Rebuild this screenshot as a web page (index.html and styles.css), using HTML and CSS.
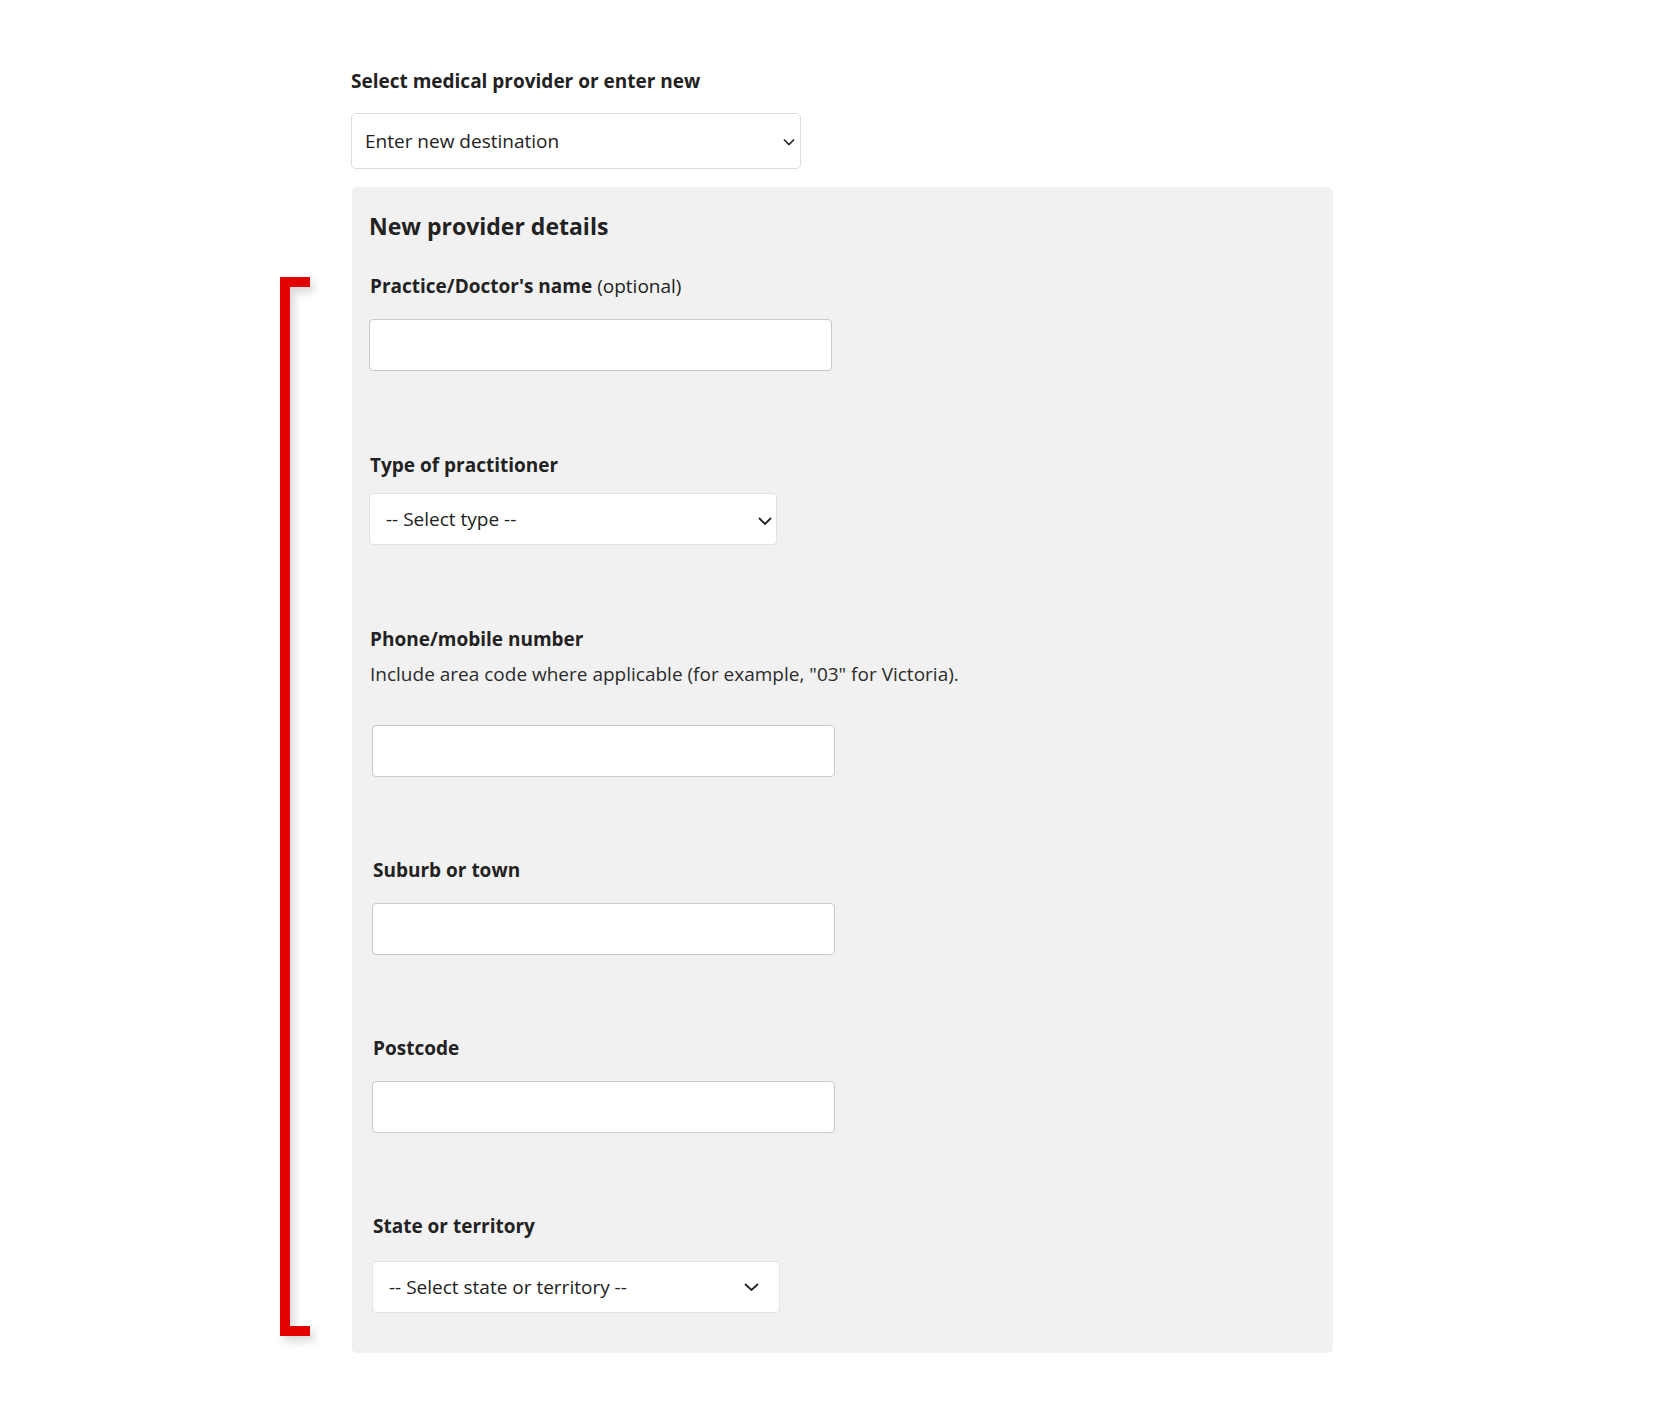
FILE: index.html
```html
<!DOCTYPE html>
<html lang="en">
<head>
    <meta charset="UTF-8">
    <meta name="viewport" content="width=device-width, initial-scale=1.0">
    <title>Medical provider</title>
    <link rel="stylesheet" href="styles.css">
</head>
<body>

    <div class="page">
        <label class="field-label" for="provider">Select medical provider or enter new</label>
        <div class="select-wrap select-wrap--main">
            <select id="provider">
                <option>Enter new destination</option>
            </select>
            <svg class="chevron" width="12" height="7" viewBox="0 0 12 7"><path d="M1 1l5 5 5-5" fill="none" stroke="#222" stroke-width="1.6"/></svg>
        </div>

        <section class="provider-panel">
            <h2>New provider details</h2>

            <div class="field field--first">
                <label class="field-label" for="practice">Practice/Doctor's name <span class="optional">(optional)</span></label>
                <input type="text" id="practice">
            </div>

            <div class="field">
                <label class="field-label field-label--tight" for="type">Type of practitioner</label>
                <div class="select-wrap select-wrap--type">
                    <select id="type">
                        <option>-- Select type --</option>
                    </select>
                    <svg class="chevron" width="14" height="8" viewBox="0 0 14 8"><path d="M1 1l6 6 6-6" fill="none" stroke="#222" stroke-width="1.8"/></svg>
                </div>
            </div>

            <div class="field">
                <label class="field-label" for="phone">Phone/mobile number</label>
                <p class="hint">Include area code where applicable (for example, "03" for Victoria).</p>
                <input type="text" id="phone" class="shifted">
            </div>

            <div class="field field--shifted">
                <label class="field-label" for="suburb">Suburb or town</label>
                <input type="text" id="suburb">
            </div>

            <div class="field field--shifted">
                <label class="field-label" for="postcode">Postcode</label>
                <input type="text" id="postcode">
            </div>

            <div class="field field--shifted">
                <label class="field-label field-label--loose" for="state">State or territory</label>
                <div class="select-wrap select-wrap--state">
                    <select id="state">
                        <option>-- Select state or territory --</option>
                    </select>
                    <svg class="chevron" width="15" height="8" viewBox="0 0 15 8"><path d="M1 1l6.5 6 6.5-6" fill="none" stroke="#222" stroke-width="1.8"/></svg>
                </div>
            </div>
        </section>

        <div class="bracket"></div>
    </div>

</body>
</html>
```

FILE: styles.css
```css
body {
    margin: 0;
    background-color: #fff;
    color: #222;
    font-family: "Open Sans", "Noto Sans", sans-serif;
}

.page {
    position: relative;
    width: 982px;
    margin-left: 351px;
    padding: 69px 0 71px;
}

.field-label {
    display: block;
    font-size: 19px;
    line-height: 24px;
    font-weight: 700;
    margin-bottom: 20px;
}

.field-label .optional {
    font-weight: 400;
}

.field-label--tight {
    margin-bottom: 16px !important;
}

.field-label--loose {
    margin-bottom: 23px !important;
}

/* selects */
.select-wrap {
    position: relative;
}

.select-wrap select {
    display: block;
    appearance: none;
    -webkit-appearance: none;
    background-color: #fff;
    border: 1px solid #d6d6d6;
    border-radius: 4px;
    color: #222;
    font-family: inherit;
    font-size: 19px;
    padding: 0 16px;
    margin: 0;
}

.select-wrap .chevron {
    position: absolute;
    top: 50%;
    transform: translateY(-50%);
    pointer-events: none;
}

.select-wrap--main select {
    width: 450px;
    height: 56px;
    padding-left: 13px;
    border-color: #dcdcdc;
    border-radius: 5px;
}

.select-wrap--main .chevron {
    left: 432px;
    margin-top: 1px;
}

.select-wrap--type select,
.select-wrap--state select {
    width: 408px;
    height: 52px;
    border-color: #e2e2e2;
}

.select-wrap--type .chevron {
    left: 389px;
    margin-top: 2px;
}

.select-wrap--state .chevron {
    left: 372px;
}

/* grey panel */
.provider-panel {
    margin: 18px 0 0 1px;
    background-color: #f1f1f1;
    border-radius: 5px;
    padding: 24px 17px 40px;
}

.provider-panel h2 {
    margin: 0;
    font-size: 23px;
    line-height: 30px;
    font-weight: 700;
}

.field {
    margin-top: 82px;
}

.field--first {
    margin-top: 33px;
}

.field .field-label {
    margin-bottom: 21px;
    padding-left: 1px;
}

.field--shifted {
    margin-top: 81px;
    padding-left: 3px;
}

.hint {
    margin: -10px 0 39px 1px;
    font-size: 19px;
    line-height: 24px;
    color: #2b2b2b;
}

input[type="text"] {
    display: block;
    box-sizing: border-box;
    width: 463px;
    height: 52px;
    margin: 0;
    background-color: #fff;
    border: 1px solid #c9c9c9;
    border-radius: 4px;
    font-family: inherit;
    font-size: 19px;
    padding: 0 14px;
}

input.shifted {
    margin-left: 3px;
}

/* red annotation bracket */
.bracket {
    position: absolute;
    left: -71px;
    top: 277px;
    width: 20px;
    height: 1039px;
    border: 10px solid #e20000;
    border-right: none;
    filter: drop-shadow(4px 5px 4px rgba(0, 0, 0, 0.16));
}
```
